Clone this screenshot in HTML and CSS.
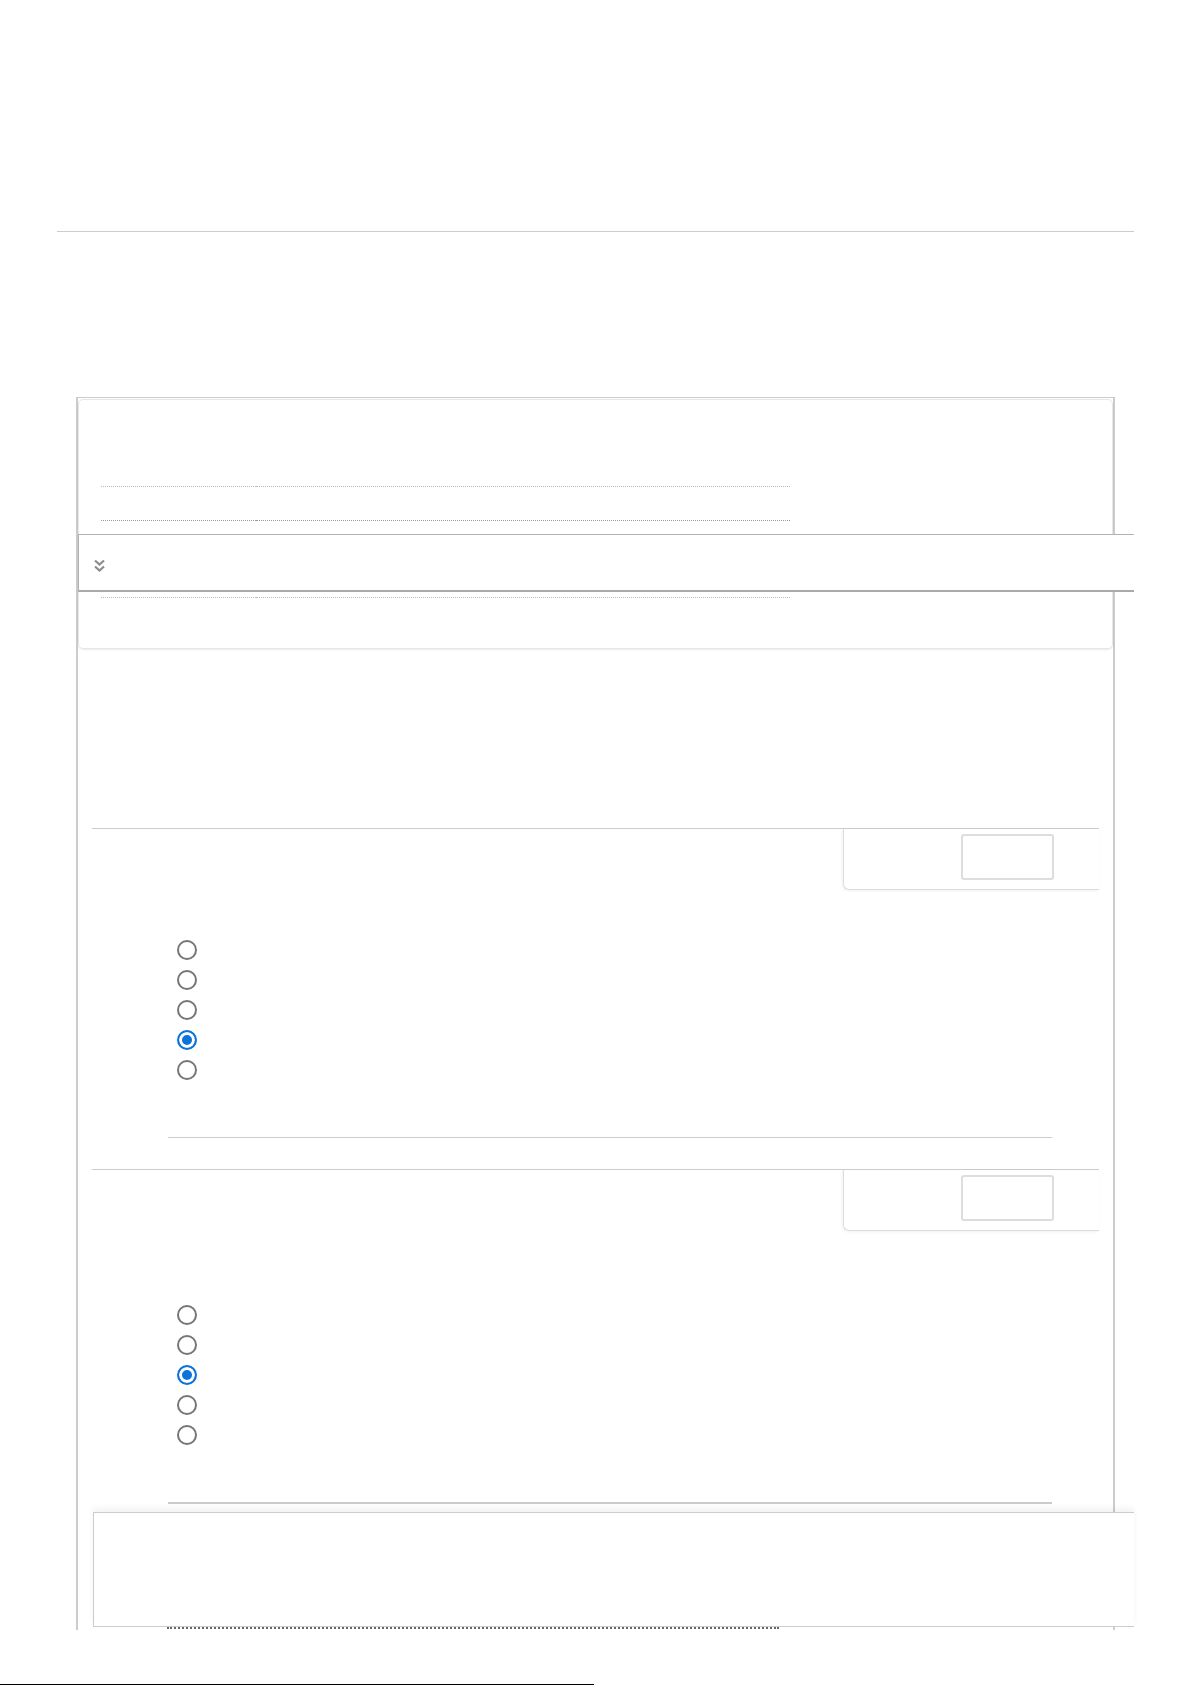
FILE: index.html
```html
<!DOCTYPE html>
<html lang="en">
<head>
    <meta charset="UTF-8">
    <meta name="viewport" content="width=device-width, initial-scale=1.0">
    <title>Quiz Review</title>
    <link rel="stylesheet" href="styles.css">
</head>
<body>
    <div class="top-space"></div>
    <hr class="page-rule">

    <div class="outer">
        <!-- Attempt summary -->
        <div class="summary">
            <div class="summary-title"></div>
            <table class="summary-table">
                <tr><td class="cell-label"></td><td class="cell-value"></td></tr>
                <tr class="row-strong"><td class="cell-label"></td><td class="cell-value"></td></tr>
                <tr><td class="cell-label"></td><td class="cell-value"></td></tr>
                <tr class="row-tall"><td class="cell-label"></td><td class="cell-value"></td></tr>
            </table>

            <!-- Collapsed toolbar laid over the summary -->
            <div class="toolbar">
                <svg class="toolbar-icon" width="13" height="14" viewBox="0 0 13 14">
                    <path d="M2 1.5 L6.5 5.5 L11 1.5" fill="none" stroke="#8c8c8c" stroke-width="2.2"/>
                    <path d="M2 7.5 L6.5 11.5 L11 7.5" fill="none" stroke="#8c8c8c" stroke-width="2.2"/>
                </svg>
            </div>
        </div>

        <!-- Question 1 -->
        <div class="question">
            <div class="q-head">
                <div class="score-panel">
                    <input type="text" class="score-input" aria-label="Mark">
                </div>
            </div>
            <div class="q-text"></div>
            <div class="options">
                <label class="option"><input type="radio" name="q1"></label>
                <label class="option"><input type="radio" name="q1"></label>
                <label class="option"><input type="radio" name="q1"></label>
                <label class="option"><input type="radio" name="q1" checked></label>
                <label class="option"><input type="radio" name="q1"></label>
            </div>
            <div class="q-foot"></div>
        </div>

        <!-- Question 2 -->
        <div class="question">
            <div class="q-head">
                <div class="score-panel">
                    <input type="text" class="score-input" aria-label="Mark">
                </div>
            </div>
            <div class="q-text q-text-long"></div>
            <div class="options">
                <label class="option"><input type="radio" name="q2"></label>
                <label class="option"><input type="radio" name="q2"></label>
                <label class="option"><input type="radio" name="q2" checked></label>
                <label class="option"><input type="radio" name="q2"></label>
                <label class="option"><input type="radio" name="q2"></label>
            </div>
            <div class="q-foot q-foot-thick"></div>
        </div>

        <div class="clipped-text"></div>

        <!-- Footer panel laid over the bottom of the list -->
        <div class="footer-panel"></div>
    </div>

    <div class="page-end"></div>
</body>
</html>
```

FILE: styles.css
```css
body {
    font-family: "Liberation Sans", Arial, sans-serif;
    margin: 0;
    background: #fff;
}
.top-space {
    height: 231px;
}
.page-rule {
    margin: 0 57px;
    width: 1077px;
    border: none;
    border-top: 1px solid #ccc;
    height: 0;
}
.outer {
    position: relative;
    margin: 165px 0 0 76px;
    width: 1039px;
    box-sizing: border-box;
    border-top: 1px solid #ccc;
    border-left: 2px solid #ccc;
    border-right: 2px solid #ccc;
    padding-bottom: 1px;
}
.summary {
    position: relative;
    margin-top: 1px;
    height: 250px;
    box-sizing: border-box;
    border: 1px solid #e6e6e6;
    border-radius: 5px;
    box-shadow: 0 1px 2px rgba(0, 0, 0, 0.08);
}
.summary-title {
    height: 53px;
}
.summary-table {
    margin-left: 22px;
    border-collapse: collapse;
}
.summary-table td {
    height: 33px;
    padding: 0;
    border-bottom: 1px dotted #bbb;
}
.summary-table .row-strong td {
    border-bottom-color: #999;
}
.summary-table .row-tall td {
    height: 42px;
}
.cell-label {
    width: 155px;
}
.cell-value {
    width: 534px;
}
.toolbar {
    position: absolute;
    top: 134px;
    left: -1px;
    width: 1056px;
    height: 58px;
    box-sizing: border-box;
    background: #fff;
    border-top: 1px solid #b3b3b3;
    border-left: 1px solid #b3b3b3;
    border-bottom: 2px solid #aaa;
    display: flex;
    align-items: center;
    padding: 6px 0 0 14px;
}
.toolbar-icon {
    display: block;
}
.question {
    margin: 179px 14px 0;
    border-top: 1px solid #ccc;
}
.question + .question {
    margin-top: 31px;
}
.q-head {
    display: flex;
    justify-content: flex-end;
}
.score-panel {
    width: 256px;
    height: 61px;
    box-sizing: border-box;
    border-left: 1px solid #ddd;
    border-bottom: 1px solid #ddd;
    border-bottom-left-radius: 6px;
    box-shadow: -1px 1px 3px rgba(0, 0, 0, 0.06);
    padding: 5px 0 0 117px;
}
.score-input {
    display: block;
    width: 93px;
    height: 46px;
    box-sizing: border-box;
    border: 2px solid #ddd;
    border-radius: 3px;
    padding: 0;
    background: #fff;
}
.q-text {
    height: 45px;
}
.q-text-long {
    height: 69px;
}
.options {
    padding-left: 85px;
}
.option {
    display: flex;
    align-items: center;
    height: 30px;
}
.option input {
    appearance: none;
    -webkit-appearance: none;
    margin: 0;
    width: 20px;
    height: 20px;
    box-sizing: border-box;
    border: 2px solid #767676;
    border-radius: 50%;
    background: #fff;
}
.option input:checked {
    border: 2px solid #0b73d9;
    background: #0b73d9;
    box-shadow: inset 0 0 0 3px #fff;
}
.q-foot {
    margin: 52px 47px 0 76px;
    border-top: 1px solid #ccc;
}
.q-foot-thick {
    border-top-width: 2px;
}
.clipped-text {
    margin: 123px 0 0 89px;
    width: 612px;
    border-top: 2px dotted #666;
}
.footer-panel {
    position: absolute;
    top: 1114px;
    left: 15px;
    width: 1041px;
    height: 115px;
    box-sizing: border-box;
    background: #fff;
    border: 1px solid #ccc;
    border-right: none;
    box-shadow: 0 -4px 6px rgba(0, 0, 0, 0.05);
}
.page-end {
    margin-top: 54px;
    width: 594px;
    height: 1px;
    background: #000;
}
```
